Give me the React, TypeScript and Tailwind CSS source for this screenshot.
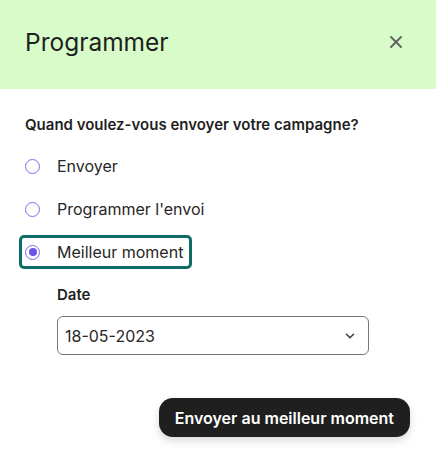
import { X, ChevronDown } from 'lucide-react';

const options = [
  { label: 'Envoyer', checked: false },
  { label: "Programmer l'envoi", checked: false },
  { label: 'Meilleur moment', checked: true },
];

export default function App() {
  return (
    <div className="w-[436px] h-[459px] bg-white font-['Inter',sans-serif] text-[#1f1f1f]">
      <div className="h-[89px] bg-[#d7fcc9] flex items-center justify-between pl-[25px] pr-[30px] pb-[5px]">
        <h1 className="text-[24.5px] font-normal text-[#1f1f1f]">Programmer</h1>
        <X size={20} strokeWidth={2.5} className="text-[#666]" />
      </div>

      <div className="pl-[25px] pr-[26px] pt-[26px]">
        <p className="text-[15px] font-semibold leading-[20px]">Quand voulez-vous envoyer votre campagne?</p>

        <div className="mt-[14px] flex flex-col gap-[9px] -ml-[6px]">
          {options.map((opt) => (
            <div
              key={opt.label}
              className={
                opt.checked
                  ? 'w-[173px] h-[34px] flex items-center gap-[17px] pl-[3px] rounded-[5px] border-[3px] border-[#0f6b66]'
                  : 'h-[34px] flex items-center gap-[17px] pl-[6px]'
              }
            >
              <span className="w-[15px] h-[15px] rounded-full border border-[#7b6cf0] flex items-center justify-center">
                {opt.checked && <span className="w-[8px] h-[8px] rounded-full bg-[#6a55e8]" />}
              </span>
              <span className="text-[16px] text-[#262626]">{opt.label}</span>
            </div>
          ))}
        </div>

        <div className="pl-[32px] mt-[16px]">
          <p className="text-[15px] font-semibold leading-[20px]">Date</p>
          <div className="mt-[11px] w-[312px] h-[39px] border border-[#777] rounded-[6px] flex items-center justify-between pl-[7px] pr-[11px]">
            <span className="text-[16px] text-[#262626]">18-05-2023</span>
            <ChevronDown size={14} strokeWidth={2.5} className="text-[#2f3b4c]" />
          </div>
        </div>

        <div className="flex justify-end mt-[43px]">
          <button className="h-[39px] px-[16px] rounded-[14px] bg-[#1f1f1f] text-white text-[16px] font-semibold shadow-[0_4px_8px_rgba(0,0,0,0.15)]">
            Envoyer au meilleur moment
          </button>
        </div>
      </div>
    </div>
  );
}
